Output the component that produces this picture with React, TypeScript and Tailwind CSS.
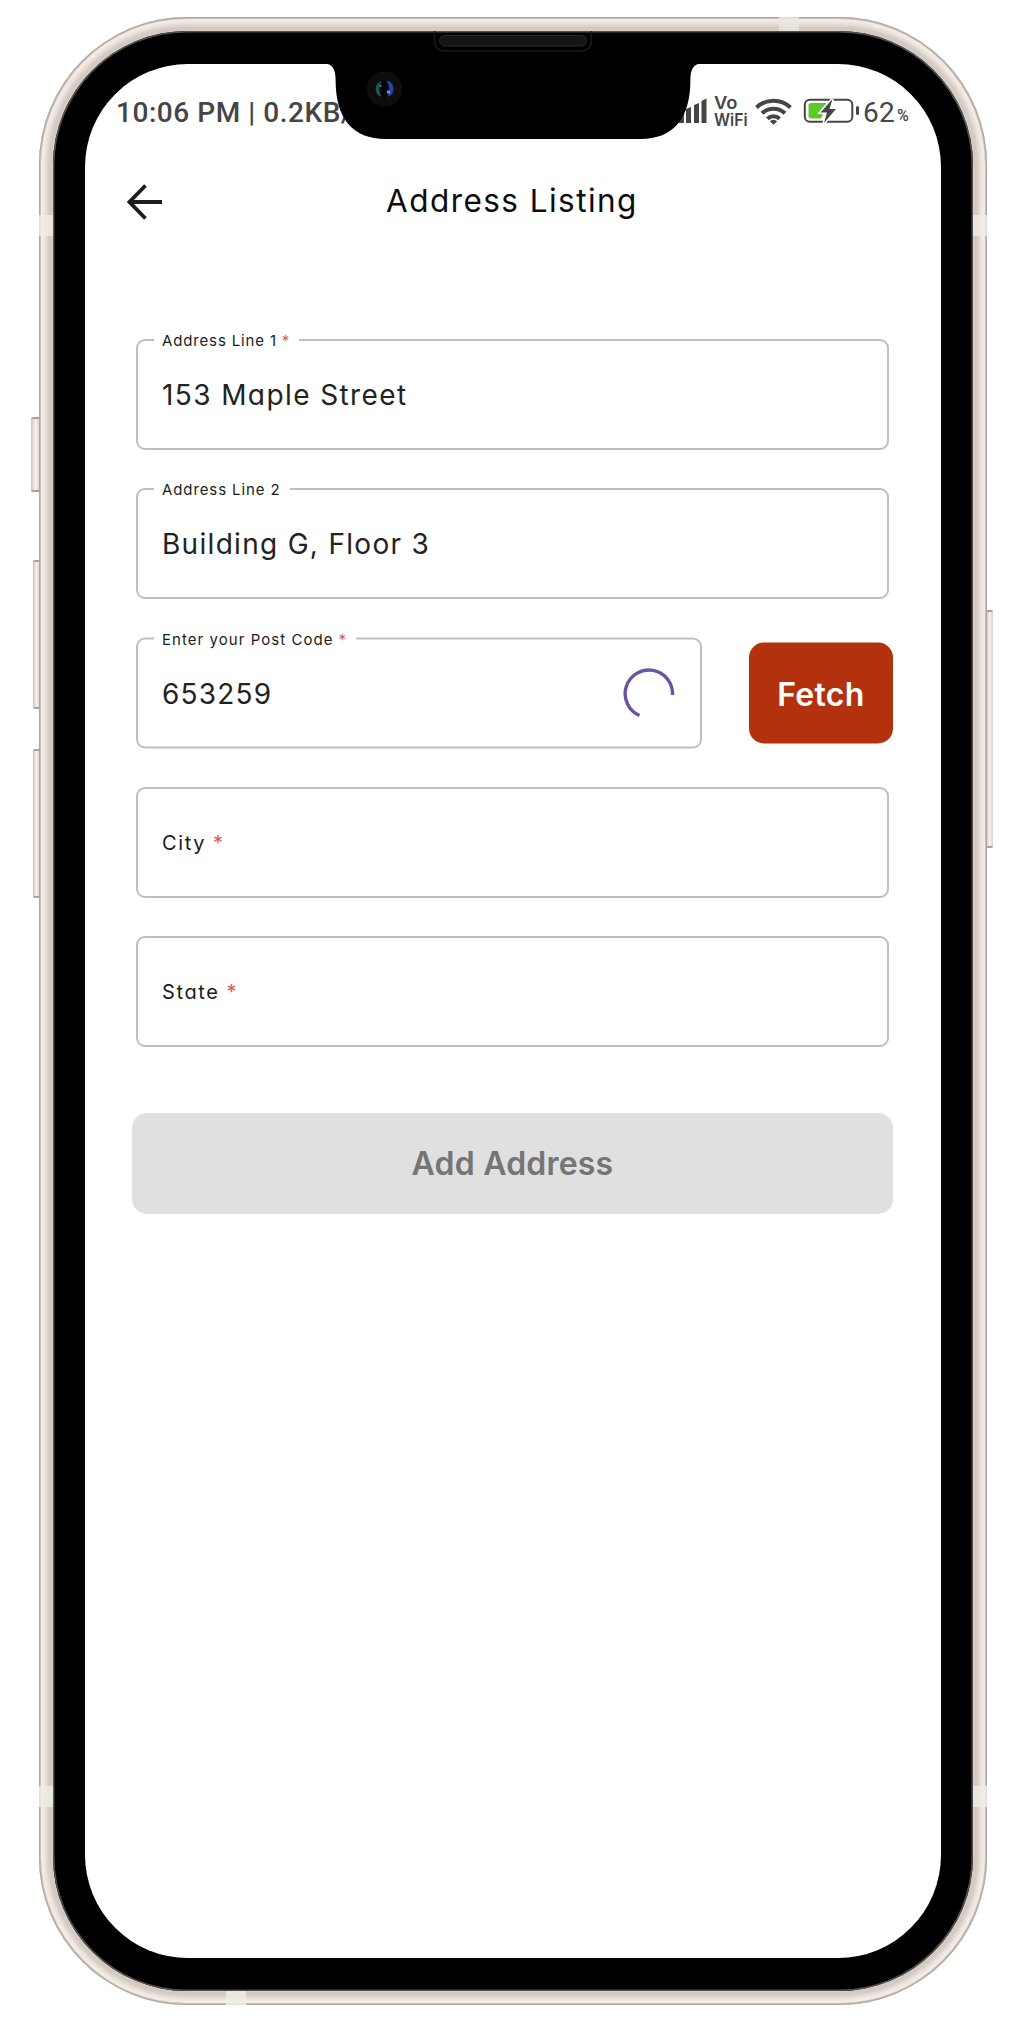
import React from "react";

const geo = "font-['Inter',sans-serif] [font-feature-settings:'cv11']";

function Star({ className = "" }: { className?: string }) {
  return <span className={`text-[#dc5a50] ${className}`}>*</span>;
}

type FieldProps = {
  label: string;
  labelClass: string;
  required?: boolean;
  value?: string;
  valueClass?: string;
  width?: string;
  gap?: string;
  children?: React.ReactNode;
};

function Field({ label, labelClass, required, value, valueClass = "", width = "w-[753px]", gap = "", children }: FieldProps) {
  return (
    <div className={`relative flex h-[111px] items-center rounded-[9px] border-2 border-[#bfbfbf] ${width}`}>
      {value ? (
        <>
          <div className={`absolute -top-[11px] left-[16px] flex h-[22px] items-center whitespace-nowrap bg-white pl-[8px] text-[15px] text-[#1c1c1c] ${gap}`}>
            <span className={labelClass}>{label}</span>
            {required && <Star className="ml-[5px]" />}
          </div>
          <span className={`ml-[24px] whitespace-nowrap text-[28px] leading-none text-[#222] ${valueClass}`}>{value}</span>
        </>
      ) : (
        <span className="ml-[24px] mt-[2px] flex whitespace-nowrap text-[20px] leading-none text-[#1a1a1a]">
          <span className={labelClass}>{label}</span>
          <Star className="ml-[7px]" />
        </span>
      )}
      {children}
    </div>
  );
}

function Spinner() {
  return (
    <svg className="ml-auto mr-[24px]" width="54" height="54" viewBox="0 0 54 54" fill="none">
      <path d="M50.5 28.5 A23.7 23.7 0 1 0 17.5 49" stroke="#6854a0" strokeWidth="3.4" />
    </svg>
  );
}

function StatusBar() {
  return (
    <div className="flex h-[92px] items-start text-[#454545] font-['Roboto',sans-serif]">
      <span className="ml-[31px] mt-[32px] w-[300px] whitespace-nowrap text-[28px] font-medium leading-[34px] tracking-[0.55px]">
        10:06 PM | 0.2KB/s
      </span>
      <svg className="ml-auto mt-[26px] shrink-0" width="190" height="42" viewBox="671 90 190 42" fill="none">
        <g fill="#454545">
          <path d="M678 113l5-2v12h-5zM685 109l5-2v16h-5zM693 105l5-2v20h-5zM700.500 101l5-2.500v24.500h-5z" />
        </g>
        <text x="713" y="108.700" fontSize="17.500" fontWeight="600" textLength="23.500" lengthAdjust="spacingAndGlyphs" fill="#454545" className="font-['Inter']">Vo</text>
        <text x="713" y="125.500" fontSize="17" fontWeight="600" textLength="33.500" lengthAdjust="spacingAndGlyphs" fill="#454545" className="font-['Inter']">WiFi</text>
        <g stroke="#454545" strokeWidth="4">
          <path d="M755.500 107.500a24.500 24.500 0 0 1 34 0" />
          <path d="M761 113.300a16.500 16.500 0 0 1 23 0" />
          <path d="M766.400 118.700a9 9 0 0 1 12.200 0" />
        </g>
        <path d="M768.800 121.300q3.700-3 7.400 0l-3.700 3.400z" fill="#454545" />
        <rect x="803.800" y="99.800" width="47.500" height="22" rx="5" stroke="#454545" strokeWidth="2" />
        <rect x="855" y="106" width="3" height="9" rx="1.500" fill="#454545" />
        <path d="M810 103h16l-7 8h4l-3 7.500h-10q-2.500 0-2.500-2.500v-10.500q0-2.500 2.500-2.500z" fill="#5fc92a" />
        <path d="M831.500 99l-12 13.500h6.500l-3 10.500 12-14h-6.500z" fill="#454545" stroke="#fff" strokeWidth="3" paintOrder="stroke" />
      </svg>
      <span className="ml-[1px] mt-[32px] w-[34px] whitespace-nowrap text-[28px] leading-[34px] tracking-[0.3px]">62</span>
      <span className="mr-[32px] mt-[37px] w-[12px] text-[16px] font-medium leading-[30px]">%</span>
    </div>
  );
}

function Notch() {
  return (
    <svg className="pointer-events-none absolute left-[320px] top-[30px]" width="390" height="112" viewBox="320 30 390 112" fill="none">
      <path d="M324 63.500C332 64 335.600 68 335.600 80C335.600 118 352 139 386 139H640C674 139 690.400 118 690.400 80C690.400 68 694 64 702 63.500Z" fill="#000" />
      <path d="M434.500 31V40Q434.500 51 445.500 51H580.500Q591.500 51 591.500 40V31" stroke="#191919" strokeWidth="1.500" />
      <rect x="439.500" y="35.500" width="147" height="10.500" rx="5.200" fill="#151515" stroke="#2a2a2a" strokeWidth="1" />
      <circle cx="384.500" cy="89" r="17.700" fill="#0d0d0d" />
      <circle cx="384.500" cy="89" r="8.800" fill="#05070c" />
      <path d="M381.500 81a8.400 8.400 0 0 0 0 16a17 17 0 0 1 0-16z" fill="#1b5557" />
      <path d="M386.500 80.500a8.500 8.500 0 0 1 1 16.500a18 18 0 0 0-1-16.500z" fill="#2444a8" />
      <circle cx="388.500" cy="92" r="1.800" fill="#a678c8" />
      <circle cx="380.500" cy="86" r="1" fill="#3ba48d" />
    </svg>
  );
}

const sideButton =
  "absolute border-y-2 border-[#aaa29a] bg-gradient-to-r from-[#cfc6be] via-[#f5f0eb] to-[#dcd4cd]";

export default function App() {
  return (
    <main className={`relative h-[2021px] w-[1025px] overflow-hidden bg-white pl-[39px] pt-[17px] ${geo}`}>
      <div className={`${sideButton} left-[31px] top-[417px] h-[75px] w-[9px] rounded-l-[2px]`} />
      <div className={`${sideButton} left-[33px] top-[560px] h-[149px] w-[7px] rounded-l-[2px]`} />
      <div className={`${sideButton} left-[33px] top-[749px] h-[149px] w-[7px] rounded-l-[2px]`} />
      <div className={`${sideButton} left-[986px] top-[610px] h-[238px] w-[7px] rounded-r-[2px]`} />

      <div className="relative h-[1988px] w-[948px] overflow-hidden rounded-[148px] bg-[#d6cdc6] p-[14px] shadow-[inset_0_0_0_1px_#b0a8a0,inset_0_0_0_2px_#c9c1b9,inset_0_0_3px_6px_#f3ece6,inset_0_0_2px_9px_#e0d8d1,inset_0_0_0_13px_#d3cac4]">
        <div className="absolute left-0 top-[198px] h-[21px] w-full bg-[#efece6]/80" />
        <div className="absolute left-0 top-[1769px] h-[21px] w-full bg-[#efece6]/80" />
        <div className="absolute left-[740px] top-0 h-[16px] w-[20px] bg-[#ebe7e0]/80" />
        <div className="absolute bottom-0 left-[187px] h-[16px] w-[20px] bg-[#efece6]/80" />
        <div className="relative h-[1960px] w-[920px] rounded-[134px] bg-black px-[32px] pt-[33px] shadow-[inset_0_0_0_1.5px_#55504d]">
          <div className="h-[1894px] w-[856px] overflow-hidden rounded-[103px] bg-white">
            <StatusBar />
            <header className="flex h-[92px] items-center">
              <svg className="ml-[42px]" width="36" height="36" viewBox="0 0 36 36" fill="none" stroke="#1d1d1d" strokeWidth="3.800">
                <path d="M35 18H3M18.500 1.500L2.500 18L18.500 34.500" />
              </svg>
              <h1 className="-mt-[3px] ml-[223px] whitespace-nowrap text-[31.500px] font-normal leading-none tracking-[1.450px] text-[#0c0c0c]">Address Listing</h1>
            </header>
            <form className="ml-[51px] mt-[91px] flex flex-col gap-[38.200px]">
              <Field label="Address Line 1" labelClass="tracking-[0.85px]" required value="153 Maple Street" valueClass="tracking-[1.4px]" gap="w-[145px]" />
              <Field label="Address Line 2" labelClass="tracking-[0.9px]" value="Building G, Floor 3" valueClass="tracking-[1.3px]" gap="w-[136px]" />
              <div className="flex translate-y-[0.500px] items-center">
                <Field label="Enter your Post Code" labelClass="tracking-[1.05px]" required value="653259" valueClass="tracking-[1.200px]" width="w-[566px]" gap="w-[202px]">
                  <Spinner />
                </Field>
                <button type="button" className="ml-[47px] h-[101px] w-[144px] rounded-[15px] bg-[#b3310d] pt-[2px] text-[32px] font-semibold tracking-[0.300px] text-white">
                  Fetch
                </button>
              </div>
              <Field label="City" labelClass="tracking-[1.6px]" required />
              <Field label="State" labelClass="tracking-[1.6px]" required />
            </form>
            <button type="button" className="ml-[47px] mt-[66px] block h-[101px] w-[761px] rounded-[15px] bg-[#e0e0e0] pt-[2px] text-[32px] font-semibold tracking-[0.200px] text-[#757575]">
              Add Address
            </button>
          </div>
        </div>
      </div>
      <Notch />
    </main>
  );
}
